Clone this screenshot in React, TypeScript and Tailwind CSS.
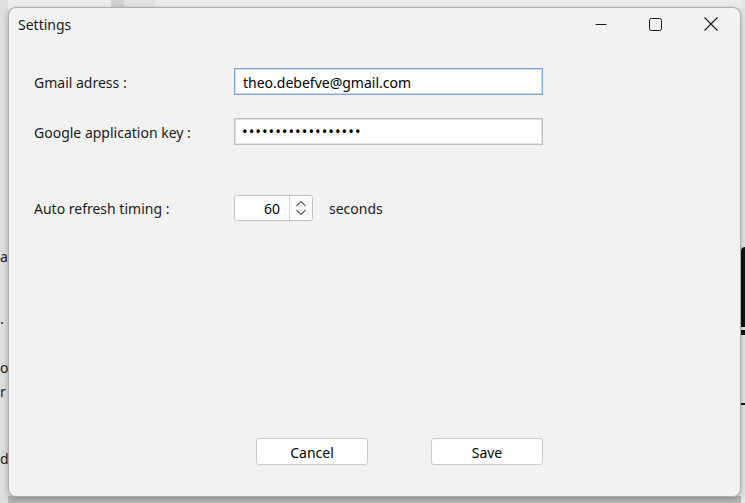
import React from "react";

const font = { fontFamily: '"Noto Sans", "Open Sans", sans-serif' };

function TitleButtons() {
  return (
    <div className="flex items-center h-full">
      <div className="w-[55px] h-full flex items-center justify-center">
        <svg width="12" height="12" viewBox="0 0 12 12">
          <path d="M0.5 6.5h11" stroke="#1a1a1a" strokeWidth="1" />
        </svg>
      </div>
      <div className="w-[55px] h-full flex items-center justify-center">
        <svg width="13" height="13" viewBox="0 0 13 13">
          <rect x="0.5" y="0.5" width="12" height="12" rx="2" fill="none" stroke="#1a1a1a" strokeWidth="1" />
        </svg>
      </div>
      <div className="w-[55px] h-full flex items-center justify-center">
        <svg width="14" height="14" viewBox="0 0 14 14">
          <path d="M0.5 0.5l13 13M13.5 0.5l-13 13" stroke="#1a1a1a" strokeWidth="1.1" />
        </svg>
      </div>
    </div>
  );
}

function Spinner({ value }: { value: number }) {
  return (
    <div className="flex w-[79px] h-[26px] rounded-[3px] border border-[#c4c4c4] bg-white overflow-hidden">
      <div className="w-[54px] flex items-center justify-end pr-[9px] text-[14px] text-black">{value}</div>
      <div className="flex-1 border-l border-[#d4d4d4] bg-[#fafafa] flex items-center justify-center">
        <svg width="12" height="20" viewBox="0 0 12 20">
          <path d="M1.5 8l4.5-4.5 4.5 4.5M1.5 12l4.5 4.5 4.5-4.5" fill="none" stroke="#606060" strokeWidth="1.1" />
        </svg>
      </div>
    </div>
  );
}

export default function App() {
  return (
    <div className="relative w-[745px] h-[503px] overflow-hidden bg-[#e4e4e4]" style={font}>
      {/* desktop behind the dialog */}
      <div className="absolute left-0 top-0 w-[745px] h-[8px] bg-[#ececec]" />
      <div className="absolute left-[111px] top-0 w-[13px] h-[8px] bg-[#d2d2d2]" />
      <div className="absolute left-[124px] top-0 w-[31px] h-[8px] bg-[#e2e2e2]" />
      <div className="absolute left-[124px] top-[495px] w-px h-[8px] bg-[#8a8a8a]" />
      <div className="absolute left-0 top-[496px] w-[745px] h-[7px] bg-[#b9b9b9]" />
      <div className="absolute left-0 top-0 w-[8px] h-[503px] bg-[#dedede]" />
      <div className="absolute left-0 top-[250px] text-[14px] text-[#1c1c1c] leading-none">a</div>
      <div className="absolute left-0 top-[312px] text-[14px] text-[#1c1c1c] leading-none">.</div>
      <div className="absolute left-0 top-[361px] text-[14px] text-[#1c1c1c] leading-none">o</div>
      <div className="absolute left-0 top-[385px] text-[14px] text-[#1c1c1c] leading-none">r</div>
      <div className="absolute left-0 top-[452px] text-[14px] text-[#1c1c1c] leading-none">d</div>
      <div className="absolute left-[741px] top-0 w-[4px] h-[503px] bg-[#e6e6e6]" />
      <div className="absolute left-[741px] top-[247px] w-[4px] h-[80px] rounded-tl-[4px] bg-[#111]" />
      <div className="absolute left-[741px] top-[330px] w-[4px] h-[5px] bg-[#111]" />
      <div className="absolute left-[741px] top-[403px] w-[4px] h-[2px] bg-[#111]" />

      {/* dialog window */}
      <div className="absolute left-[8px] top-[7px] w-[733px] h-[490px] rounded-[8px] border border-[#adadad] bg-[#f2f2f2] flex flex-col shadow-[0_2px_6px_rgba(0,0,0,0.25)]">
        <div className="h-[32px] flex items-center justify-between">
          <span className="pl-[9px] text-[14px] text-[#1a1a1a]">Settings</span>
          <div className="h-full pr-[2px]">
            <TitleButtons />
          </div>
        </div>

        <div className="flex flex-col flex-1 pl-[25px] w-[534px] text-[14px] text-[#1a1a1a]">
          <div className="grid grid-cols-[200px_1fr] items-center mt-[28px]">
            <span className="pt-px">Gmail adress :</span>
            <div className="h-[27px] border border-[#7ba4d8] shadow-[inset_0_0_0_1px_#c9dcf1] bg-white flex items-center pl-[8px] pt-px text-black">
              theo.debefve@gmail.com
            </div>
          </div>

          <div className="grid grid-cols-[200px_1fr] items-center mt-[23px]">
            <span className="pt-px">Google application key :</span>
            <div className="h-[27px] border border-[#bebebe] shadow-[inset_0_0_0_1px_#e2e2e2] bg-white flex items-center pl-[7px] text-black text-[15px] tracking-[1px]">
              ••••••••••••••••••
            </div>
          </div>

          <div className="grid grid-cols-[200px_1fr] items-center mt-[50px]">
            <span>Auto refresh timing :</span>
            <div className="flex items-center gap-[16px]">
              <Spinner value={60} />
              <span>seconds</span>
            </div>
          </div>

          <div className="flex-1" />

          <div className="flex justify-end gap-[63px] pb-[31px]">
            <button className="w-[112px] h-[27px] rounded-[3px] border border-[#c9c9c9] bg-white pt-px text-[14px] text-black">
              Cancel
            </button>
            <button className="w-[112px] h-[27px] rounded-[3px] border border-[#c9c9c9] bg-white pt-px text-[14px] text-black">
              Save
            </button>
          </div>
        </div>
      </div>
    </div>
  );
}
